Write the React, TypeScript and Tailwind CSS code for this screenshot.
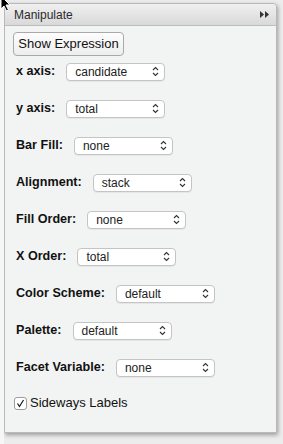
const rows: { label: string; value: string }[] = [
  { label: "x axis:", value: "candidate" },
  { label: "y axis:", value: "total" },
  { label: "Bar Fill:", value: "none" },
  { label: "Alignment:", value: "stack" },
  { label: "Fill Order:", value: "none" },
  { label: "X Order:", value: "total" },
  { label: "Color Scheme:", value: "default" },
  { label: "Palette:", value: "default" },
  { label: "Facet Variable:", value: "none" },
];

const Select = ({ value }: { value: string }) => (
  <div className="flex h-[18px] w-[99px] items-center justify-between rounded-[4px] border border-[#c4c4c4] bg-white pl-[8px] pr-[5px] text-[12px] text-[#222] shadow-[0_1px_0_rgba(0,0,0,0.05)]">
    <span className="leading-none">{value}</span>
    <svg width="7" height="11" viewBox="0 0 7 11" fill="none" stroke="#333" strokeWidth="1.1">
      <path d="M1 4 L3.5 1.5 L6 4" />
      <path d="M1 7 L3.5 9.5 L6 7" />
    </svg>
  </div>
);

export default function App() {
  return (
    <div
      className="relative h-[444px] w-[283px] overflow-hidden bg-[#ececec]"
      style={{ fontFamily: '"Liberation Sans", Arial, sans-serif' }}
    >
      <div className="absolute left-0 top-0 h-[444px] w-[4px] bg-[#f6f6f6]" />
      <div className="ml-[4px] mt-[3px] flex h-[430px] w-[273px] flex-col rounded-t-[4px] border border-[#b9b9b9] bg-[#f2f4f3] shadow-[1px_2px_4px_rgba(0,0,0,0.35)]">
        <div className="flex h-[22px] items-center justify-between rounded-t-[4px] border-b border-[#bdbdbd] bg-gradient-to-b from-[#f0f0f0] to-[#d9d9d9] pl-[9px] pr-[6px]">
          <span className="text-[12px] text-[#2a2a2a]">Manipulate</span>
          <svg width="10" height="7" viewBox="0 0 10 7" fill="#333">
            <path d="M0 0 L4 3.5 L0 7 Z" />
            <path d="M5 0 L9 3.5 L5 7 Z" />
          </svg>
        </div>
        <div className="flex flex-col px-[8px] pt-[6px]">
          <div className="flex h-[24px] w-[111px] items-center justify-center rounded-[4px] border border-[#a9a9a9] bg-gradient-to-b from-[#fdfdfd] to-[#eeeeee] text-[13px] text-[#111]">
            Show Expression
          </div>
          <div className="mt-[-3px] flex flex-col pl-[3px]">
            {rows.map((r) => (
              <div key={r.label} className="flex h-[37px] items-center gap-[11px]">
                <span className="text-[12.6px] font-bold text-[#111]">{r.label}</span>
                <Select value={r.value} />
              </div>
            ))}
            <div className="flex h-[34px] items-center gap-[3px]">
              <div className="-ml-[2px] flex h-[13px] w-[13px] items-center justify-center rounded-[3px] border border-[#9d9d9d] bg-white">
                <svg width="9" height="9" viewBox="0 0 9 9" fill="none" stroke="#111" strokeWidth="1.2">
                  <path d="M1.5 4.5 L3.5 7.5 L7.5 1" />
                </svg>
              </div>
              <span className="text-[13px] text-[#111]">Sideways Labels</span>
            </div>
          </div>
        </div>
      </div>
      <svg className="absolute left-0 top-[-4px]" width="12" height="16" viewBox="0 0 12 16">
        <path d="M1 0 L1 13 L4 10 L6.5 15 L8.5 14 L6 9 L10 9 Z" fill="#000" stroke="#fff" strokeWidth="1" />
      </svg>
    </div>
  );
}
